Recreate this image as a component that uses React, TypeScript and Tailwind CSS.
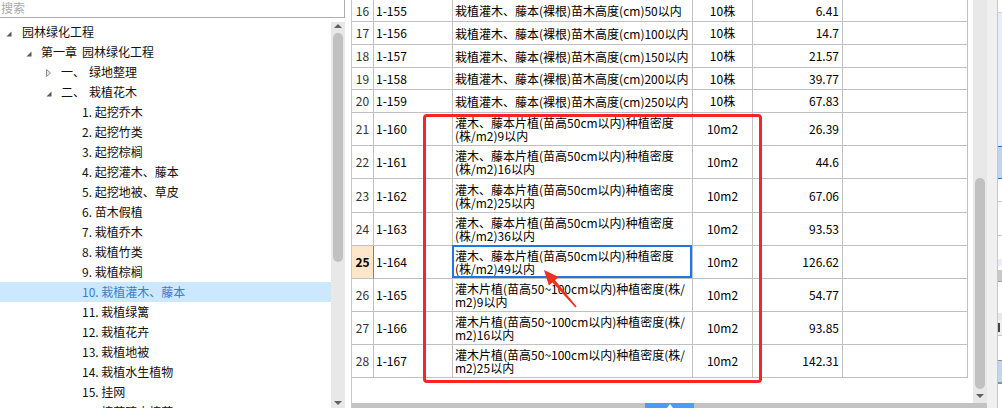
import React from "react";

type Row = {
  n: number;
  code: string;
  lines: string[];
  unit: string;
  price: string;
  h: number;
};

const rows: Row[] = [
  { n: 16, code: "1-155", lines: ["栽植灌木、藤本(裸根)苗木高度(cm)50以内"], unit: "10株", price: "6.41", h: 22 },
  { n: 17, code: "1-156", lines: ["栽植灌木、藤本(裸根)苗木高度(cm)100以内"], unit: "10株", price: "14.7", h: 23 },
  { n: 18, code: "1-157", lines: ["栽植灌木、藤本(裸根)苗木高度(cm)150以内"], unit: "10株", price: "21.57", h: 23 },
  { n: 19, code: "1-158", lines: ["栽植灌木、藤本(裸根)苗木高度(cm)200以内"], unit: "10株", price: "39.77", h: 22 },
  { n: 20, code: "1-159", lines: ["栽植灌木、藤本(裸根)苗木高度(cm)250以内"], unit: "10株", price: "67.83", h: 23 },
  { n: 21, code: "1-160", lines: ["灌木、藤本片植(苗高50cm以内)种植密度", "(株/m2)9以内"], unit: "10m2", price: "26.39", h: 33 },
  { n: 22, code: "1-161", lines: ["灌木、藤本片植(苗高50cm以内)种植密度", "(株/m2)16以内"], unit: "10m2", price: "44.6", h: 33 },
  { n: 23, code: "1-162", lines: ["灌木、藤本片植(苗高50cm以内)种植密度", "(株/m2)25以内"], unit: "10m2", price: "67.06", h: 34 },
  { n: 24, code: "1-163", lines: ["灌木、藤本片植(苗高50cm以内)种植密度", "(株/m2)36以内"], unit: "10m2", price: "93.53", h: 33 },
  { n: 25, code: "1-164", lines: ["灌木、藤本片植(苗高50cm以内)种植密度", "(株/m2)49以内"], unit: "10m2", price: "126.62", h: 33 },
  { n: 26, code: "1-165", lines: ["灌木片植(苗高50~100cm以内)种植密度(株/", "m2)9以内"], unit: "10m2", price: "54.77", h: 33 },
  { n: 27, code: "1-166", lines: ["灌木片植(苗高50~100cm以内)种植密度(株/", "m2)16以内"], unit: "10m2", price: "93.85", h: 33 },
  { n: 28, code: "1-167", lines: ["灌木片植(苗高50~100cm以内)种植密度(株/", "m2)25以内"], unit: "10m2", price: "142.31", h: 33 },
];

type TreeItem = {
  pl: string;
  icon?: "open" | "closed";
  prefix?: string;
  text: string;
  selected?: boolean;
};

const tree: TreeItem[] = [
  { pl: "pl-[6px]", icon: "open", text: "园林绿化工程" },
  { pl: "pl-[26px]", icon: "open", prefix: "第一章", text: "园林绿化工程" },
  { pl: "pl-[46px]", icon: "closed", prefix: "一、", text: "绿地整理" },
  { pl: "pl-[46px]", icon: "open", prefix: "二、", text: "栽植花木" },
  { pl: "pl-[82px]", text: "1. 起挖乔木" },
  { pl: "pl-[82px]", text: "2. 起挖竹类" },
  { pl: "pl-[82px]", text: "3. 起挖棕榈" },
  { pl: "pl-[82px]", text: "4. 起挖灌木、藤本" },
  { pl: "pl-[82px]", text: "5. 起挖地被、草皮" },
  { pl: "pl-[82px]", text: "6. 苗木假植" },
  { pl: "pl-[82px]", text: "7. 栽植乔木" },
  { pl: "pl-[82px]", text: "8. 栽植竹类" },
  { pl: "pl-[82px]", text: "9. 栽植棕榈" },
  { pl: "pl-[82px]", text: "10. 栽植灌木、藤本", selected: true },
  { pl: "pl-[82px]", text: "11. 栽植绿篱" },
  { pl: "pl-[82px]", text: "12. 栽植花卉" },
  { pl: "pl-[82px]", text: "13. 栽植地被" },
  { pl: "pl-[82px]", text: "14. 栽植水生植物" },
  { pl: "pl-[82px]", text: "15. 挂网" },
  { pl: "pl-[82px]", text: "16. 植草砖内植草" },
];

function OpenIcon() {
  return (
    <svg width="6" height="6" viewBox="0 0 6 6" className="mt-[3px]">
      <polygon points="5.5,0.5 5.5,5.5 0.5,5.5" fill="#595959" />
    </svg>
  );
}

function ClosedIcon() {
  return (
    <svg width="6" height="8" viewBox="0 0 6 8" className="mt-[1px]">
      <polygon points="0.5,0.5 4.5,4 0.5,7.5" fill="#e6e6e6" stroke="#8c8c8c" strokeWidth="1" />
    </svg>
  );
}

function TreeRow({ item }: { item: TreeItem }) {
  return (
    <div
      className={`flex h-[20px] items-center whitespace-nowrap ${item.pl} ${
        item.selected ? "bg-[#cce8ff] text-[#3b7dd0]" : "text-[#111111]"
      }`}
    >
      {item.icon && (
        <div
          className={`flex items-center ${
            item.pl === "pl-[6px]" ? "w-[16px]" : "w-[15px]"
          }`}
        >
          {item.icon === "open" ? <OpenIcon /> : <ClosedIcon />}
        </div>
      )}
      {item.prefix && (
        <span className={item.prefix === "第一章" ? "mr-[5px]" : "mr-[4px]"}>{item.prefix}</span>
      )}
      <span>{item.text}</span>
    </div>
  );
}

function Arrow({ dir }: { dir: "up" | "down" }) {
  return (
    <svg width="8" height="4" viewBox="0 0 8 4">
      {dir === "up" ? (
        <polygon points="0,4 4,0 8,4" fill="#606060" />
      ) : (
        <polygon points="0,0 8,0 4,4" fill="#606060" />
      )}
    </svg>
  );
}

export default function App() {
  return (
    <div className="relative flex h-[408px] w-[1002px] overflow-hidden bg-white font-['Noto_Sans_CJK_SC',sans-serif] text-[12px]">
      {/* Left panel */}
      <div className="flex w-[345px] shrink-0 flex-col">
        <div className="flex h-[18px] items-center border-b border-r border-[#abadb3] pb-[2px] pl-[1px] text-[#a8a8a8]">
          搜索
        </div>
        <div className="mt-[4px] flex min-h-0 flex-1">
          <div className="min-w-0 flex-1 overflow-hidden">
            {tree.map((t, i) => (
              <TreeRow key={i} item={t} />
            ))}
          </div>
          <div className="flex w-[14px] shrink-0 flex-col items-center bg-[#e8e8e8]">
            <div className="mt-[2px]">
              <Arrow dir="up" />
            </div>
            <div className="mt-[5px] h-[229px] w-[10px] rounded-full bg-[#c1c1c1]" />
            <div className="flex-1" />
            <div className="mb-[3px]">
              <Arrow dir="down" />
            </div>
          </div>
        </div>
      </div>

      {/* gap */}
      <div className="w-[6px] shrink-0" />

      {/* Grid panel */}
      <div className="flex w-[636px] shrink-0 flex-col border-l border-[#c8c8c8]">
        <div className="flex min-h-0 flex-1">
          <div className="min-w-0 flex-1 overflow-hidden text-black">
            {rows.map((r) => {
              const sel = r.n === 25;
              return (
                <div key={r.n} className="flex" style={{ height: r.h }}>
                  <div
                    className={`flex w-[22px] shrink-0 items-center justify-center border-b border-r border-b-[#c0c0c0] ${
                      sel
                        ? "border-r-[#3b8ef0] bg-[#fde6c9] font-bold"
                        : "border-r-[#c0c0c0] text-[#333333]"
                    }`}
                  >
                    {r.n}
                  </div>
                  <div className="flex w-[79px] shrink-0 items-center border-b border-r border-[#c0c0c0] pl-[2px]">
                    {r.code}
                  </div>
                  <div className="relative flex w-[240px] shrink-0 flex-col justify-center whitespace-nowrap border-b border-r border-[#c0c0c0] pl-[2px] leading-[13px]">
                    {r.lines.map((l, i) => (
                      <div key={i}>{l}</div>
                    ))}
                    {sel && (
                      <div className="pointer-events-none absolute -left-px -top-px bottom-0 right-0 border-2 border-[#1f77e6]" />
                    )}
                  </div>
                  <div className="flex w-[60px] shrink-0 items-center justify-center border-b border-r border-[#c0c0c0]">
                    {r.unit}
                  </div>
                  <div className="flex w-[90px] shrink-0 items-center justify-end border-b border-r border-[#c0c0c0] pr-[3px]">
                    {r.price}
                  </div>
                  <div className="w-[125px] shrink-0 border-b border-r border-[#c0c0c0]" />
                </div>
              );
            })}
          </div>
          {/* vertical scrollbar */}
          <div className="flex w-[14px] shrink-0 flex-col items-center bg-[#e8e8e8]">
            <div className="mt-[178px] h-[211px] w-[10px] rounded-full bg-[#c1c1c1]" />
            <div className="mt-[5px]">
              <Arrow dir="down" />
            </div>
          </div>
        </div>
        {/* horizontal bar */}
        <div className="flex h-[5px] shrink-0 bg-[#c3c3c3]">
          <div className="ml-[293px] flex h-full w-[49px] justify-center bg-[#4b9cf2]">
            <svg width="8" height="5" viewBox="0 0 8 5">
              <polygon points="1,5 4,1 7,5" fill="#ffffff" />
            </svg>
          </div>
        </div>
      </div>

      {/* side gray */}
      <div className="w-[10px] shrink-0 bg-[#f0f0f0]" />

      {/* right strip */}
      <div className="flex w-[5px] shrink-0 flex-col border-l border-[#c8c8c8]">
        <div className="h-[13px] border-b border-[#c8d4e4] bg-white" />
        <div className="h-[133px] bg-[#e6eefa]" />
        <div className="h-[1px] bg-[#1a73e8]" />
        <div className="h-[31px] bg-[#bcd6f6]" />
        <div className="h-[1px] bg-[#1a73e8]" />
        <div className="h-[22px] bg-white" />
        <div className="h-[1px] bg-[#c8c8c8]" />
        <div className="h-[33px] bg-white" />
        <div className="h-[1px] bg-[#c8c8c8]" />
        <div className="h-[23px] bg-white" />
        <div className="h-[7px] bg-[#e6eefa]" />
        <div className="h-[4px] bg-white" />
        <div className="h-[11px] bg-[#c8c8c8]" />
        <div className="h-[1px] bg-[#a0a0a0]" />
        <div className="h-[31px] bg-white" />
        <div className="h-[7px] bg-[#e8e8e8]" />
        <div className="flex h-[15px] bg-[#f0f0f0]">
          <div className="mt-[3px] h-[9px] w-[2px] bg-[#444444]" />
        </div>
        <div className="h-[1px] bg-[#c8c8c8]" />
        <div className="h-[24px] bg-white" />
        <div className="h-[1px] bg-[#909090]" />
        <div className="h-[21px] bg-[#bcd6f6]" />
        <div className="h-[2px] bg-[#909090]" />
        <div className="flex-1 bg-white" />
      </div>

      {/* red annotation box */}
      <div className="pointer-events-none absolute left-[423px] top-[114px] h-[269px] w-[339px] rounded-[4px] border-[3px] border-[#fa2424]" />

      {/* red annotation arrow */}
      <svg
        className="pointer-events-none absolute left-[536px] top-[262px]"
        width="48"
        height="52"
        viewBox="0 0 48 52"
      >
        <polygon
          points="8,8 22.7,15.1 19.1,18.2 40.6,44.5 39.4,45.5 16.5,20.4 12.9,23.5"
          fill="#f0301e"
        />
      </svg>
    </div>
  );
}
